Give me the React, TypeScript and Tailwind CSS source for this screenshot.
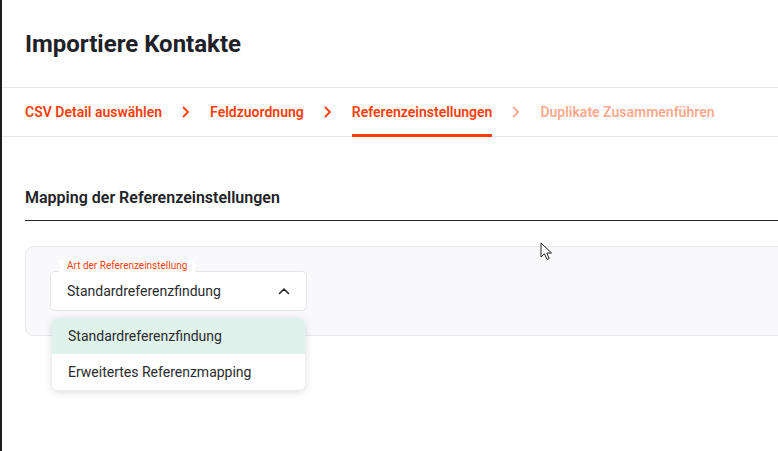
import React from "react";

const Chevron = ({ color }: { color: string }) => (
  <svg width="8" height="12" viewBox="0 0 8 12" fill="none">
    <path d="M1.5 1.5 L6 6 L1.5 10.5" stroke={color} strokeWidth="1.8" strokeLinecap="round" strokeLinejoin="round" />
  </svg>
);

export default function App() {
  return (
    <div
      className="relative w-[778px] h-[451px] overflow-hidden bg-white border-l-2 border-[#1c1c1c]"
      style={{ fontFamily: "Roboto, 'Liberation Sans', sans-serif" }}
    >
      <div className="h-[88px] flex items-center pl-[23px] border-b border-[#e6e6e8]">
        <h1 className="text-[24px] font-bold text-[#1f2128]">Importiere Kontakte</h1>
      </div>
      <div className="h-[49px] flex items-stretch pl-[23px] gap-5 border-b border-[#e6e6e8]">
        <div className="flex items-center text-[14px] font-semibold text-[#ff3d0a]">CSV Detail auswählen</div>
        <div className="flex items-center"><Chevron color="#ff3d0a" /></div>
        <div className="flex items-center text-[14px] font-semibold text-[#ff3d0a]">Feldzuordnung</div>
        <div className="flex items-center"><Chevron color="#ff3d0a" /></div>
        <div className="relative flex items-center text-[14px] font-semibold text-[#ff3d0a]">
          Referenzeinstellungen
          <div className="absolute left-0 right-0 bottom-[-1px] h-[3px] bg-[#ff3d0a]" />
        </div>
        <div className="flex items-center"><Chevron color="#ffa98e" /></div>
        <div className="flex items-center text-[14px] font-semibold text-[#ffa98e]">Duplikate Zusammenführen</div>
      </div>
      <div className="pl-[23px]">
        <div className="h-[84px] flex items-end pb-[10px] border-b border-[#222326] w-[800px]">
          <h2 className="text-[16px] font-semibold text-[#222326]">Mapping der Referenzeinstellungen</h2>
        </div>
        <div className="mt-[25px] w-[800px] h-[90px] bg-[#f9f9fb] border border-[#e8e8ec] rounded-[8px] pt-[24px] pl-[24px]">
          <div className="relative w-[257px]">
            <div className="absolute left-[9px] top-[-11px] px-2 bg-white text-[10px] leading-[12px] text-[#ff3d0a]">
              Art der Referenzeinstellung
            </div>
            <div className="h-[40px] bg-white border border-[#e3e3e8] rounded-[5px] flex items-center justify-between pl-[16px] pr-[16px]">
              <span className="text-[14px] text-[#2b2b30]">Standardreferenzfindung</span>
              <svg width="12" height="8" viewBox="0 0 12 8" fill="none">
                <path d="M1.5 6.5 L6 2 L10.5 6.5" stroke="#2b2b30" strokeWidth="1.6" strokeLinecap="round" strokeLinejoin="round" />
              </svg>
            </div>
            <div className="absolute left-[2px] top-[47px] w-[253px] bg-white rounded-[6px] shadow-[0_2px_8px_rgba(0,0,0,0.15)] overflow-hidden">
              <div className="h-[36px] flex items-center pl-[16px] bg-[#dff2ec] text-[14px] text-[#2b2b30]">Standardreferenzfindung</div>
              <div className="h-[36px] flex items-center pl-[16px] text-[14px] text-[#2b2b30]">Erweitertes Referenzmapping</div>
            </div>
          </div>
        </div>
      </div>
      <svg className="absolute left-[538px] top-[242px]" width="14" height="20" viewBox="0 0 14 20">
        <path d="M1 1 L1 15 L4.5 11.8 L7 17.5 L9.2 16.5 L6.8 11 L11.5 11 Z" fill="white" stroke="#222" strokeWidth="1" strokeLinejoin="round" />
      </svg>
    </div>
  );
}
